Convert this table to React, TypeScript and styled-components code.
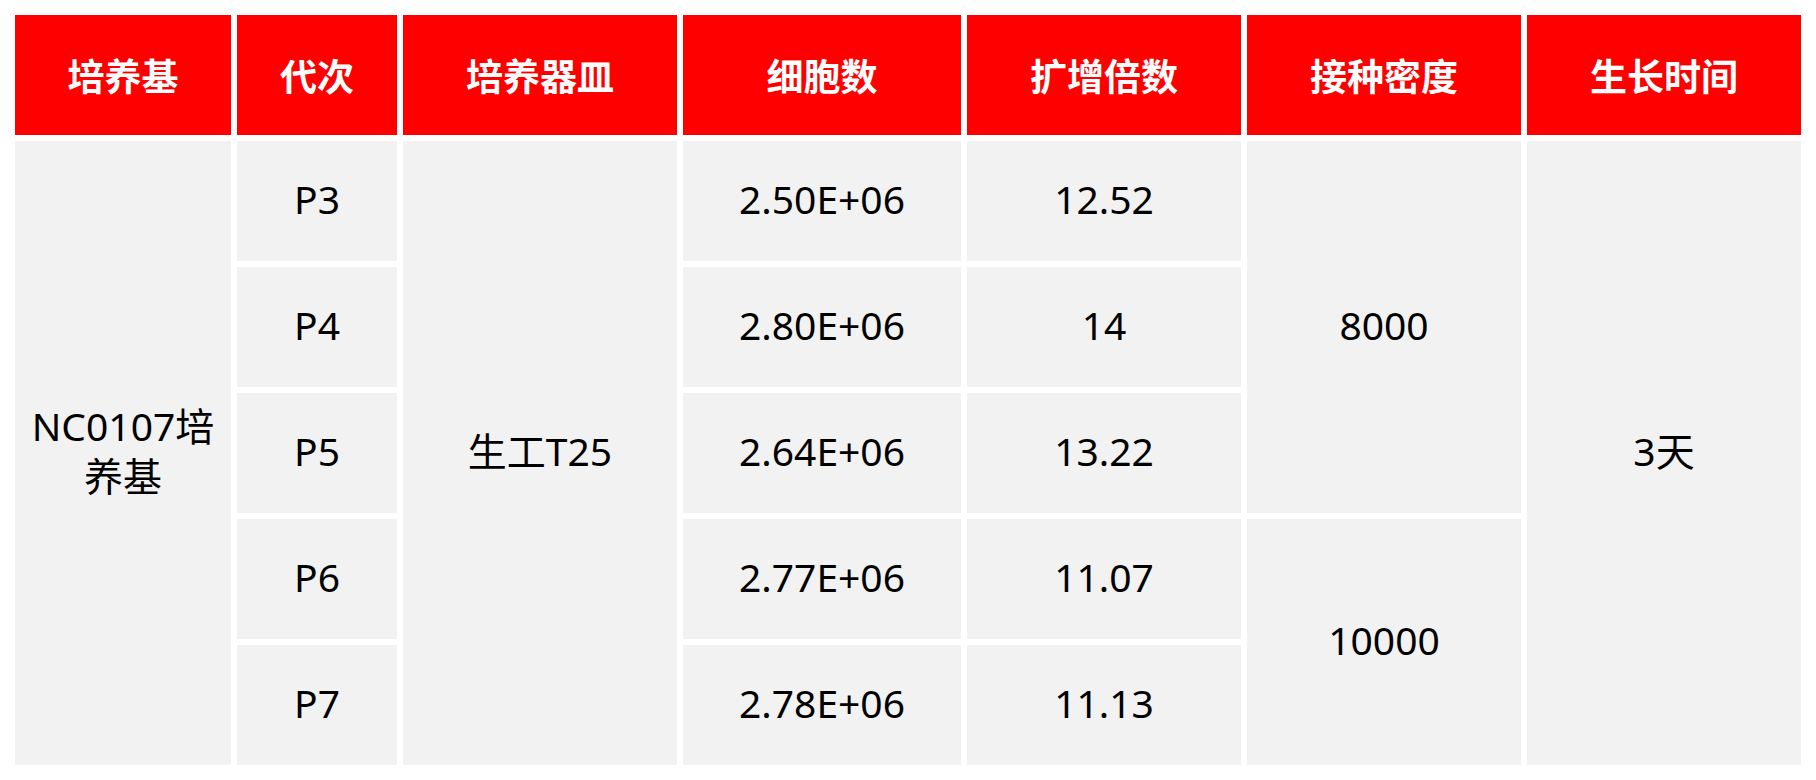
import React from "react";
import styled, { createGlobalStyle } from "styled-components";

const GlobalStyle = createGlobalStyle`
  html, body {
    margin: 0;
    padding: 0;
    background: #ffffff;
  }
  body {
    font-family: "Noto Sans", "Noto Sans CJK SC", sans-serif;
  }
`;

const Page = styled.div`
  padding: 15px;
  width: 1816px;
  box-sizing: border-box;
`;

const Table = styled.div`
  display: grid;
  grid-template-columns: 216px 160px 274px 278px 274px 274px 274px;
  grid-template-rows: repeat(6, 120px);
  gap: 6px;
`;

const HeadCell = styled.div`
  background: #ff0000;
  color: #ffffff;
  font-family: "Noto Sans CJK SC", sans-serif;
  font-weight: 700;
  font-size: 37px;
  display: flex;
  align-items: center;
  justify-content: center;
  text-align: center;
`;

const Cell = styled.div<{ $col: number; $row: number; $span?: number }>`
  grid-column: ${(p) => p.$col};
  grid-row: ${(p) => p.$row} / span ${(p) => p.$span ?? 1};
  background: #f2f2f2;
  color: #000000;
  font-size: 39px;
  line-height: 50px;
  display: flex;
  align-items: center;
  justify-content: center;
  text-align: center;
  padding: 0 8px 4px;
`;

const headers = ["培养基", "代次", "培养器皿", "细胞数", "扩增倍数", "接种密度", "生长时间"];

const rows = [
  { p: "P3", cells: "2.50E+06", fold: "12.52" },
  { p: "P4", cells: "2.80E+06", fold: "14" },
  { p: "P5", cells: "2.64E+06", fold: "13.22" },
  { p: "P6", cells: "2.77E+06", fold: "11.07" },
  { p: "P7", cells: "2.78E+06", fold: "11.13" },
];

export default function App() {
  return (
    <>
      <GlobalStyle />
      <Page>
        <Table>
          {headers.map((h) => (
            <HeadCell key={h}>{h}</HeadCell>
          ))}
          <Cell $col={1} $row={2} $span={5}>
            NC0107培
            <br />
            养基
          </Cell>
          <Cell $col={3} $row={2} $span={5}>
            生工T25
          </Cell>
          {rows.map((r, i) => (
            <React.Fragment key={r.p}>
              <Cell $col={2} $row={i + 2}>
                {r.p}
              </Cell>
              <Cell $col={4} $row={i + 2}>
                {r.cells}
              </Cell>
              <Cell $col={5} $row={i + 2}>
                {r.fold}
              </Cell>
            </React.Fragment>
          ))}
          <Cell $col={6} $row={2} $span={3}>
            8000
          </Cell>
          <Cell $col={6} $row={5} $span={2}>
            10000
          </Cell>
          <Cell $col={7} $row={2} $span={5}>
            3天
          </Cell>
        </Table>
      </Page>
    </>
  );
}
